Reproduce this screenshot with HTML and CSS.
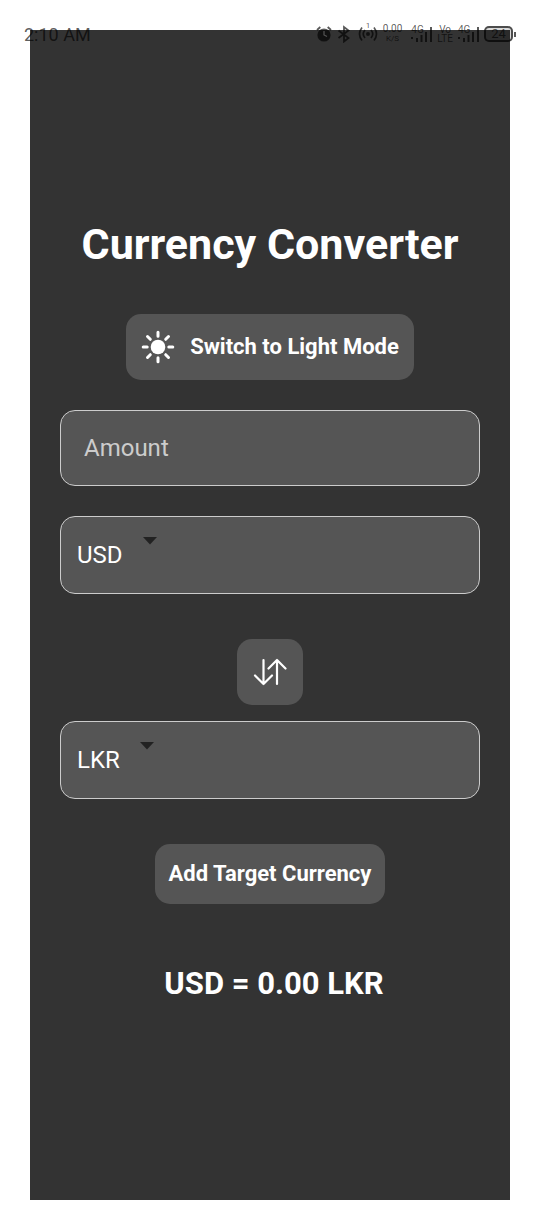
FILE: index.html
```html
<!DOCTYPE html>
<html lang="en">
<head>
<meta charset="utf-8">
<meta name="viewport" content="width=device-width, initial-scale=1">
<title>Currency Converter</title>
<link rel="stylesheet" href="styles.css">
</head>
<body>
<header class="status">
  <span class="time">2:10 AM</span>
  <div class="indicators">
    <svg class="ico" width="16" height="18" viewBox="0 0 16 18" aria-hidden="true"><circle cx="8" cy="10" r="6.600" fill="currentColor"/><path d="M1 5 4.300 2M15 5 11.700 2" stroke="currentColor" stroke-width="1.800" fill="none"/><path d="M8 6v4l3 1.500" stroke="#555" stroke-width="1.200" fill="none"/></svg>
    <svg class="ico" width="14" height="18" viewBox="0 0 14 18" aria-hidden="true"><path d="M1.500 5.500 11.500 13 7 16.500V2l4.500 3.500L1.500 13" fill="none" stroke="currentColor" stroke-width="1.800"/></svg>
    <span class="hotspot"><small class="count">1</small><svg class="ico" width="20" height="16" viewBox="0 0 20 16" aria-hidden="true"><circle cx="10" cy="8" r="2" fill="currentColor"/><path d="M4 1.500q-5 6.500 0 13M16 1.500q5 6.500 0 13M7 4q-3.500 4 0 8M13 4q3.500 4 0 8" fill="none" stroke="currentColor" stroke-width="1.700"/></svg></span>
    <span class="stack speed"><span class="rate">0.00</span><span class="unit">K/S</span></span>
    <span class="signal"><span class="net">4G</span><svg class="bars" width="21" height="16" viewBox="0 0 21 16" aria-hidden="true"><path d="M1 11v2M6 12v4M10.500 9v7M15 6v10M20 1v15" stroke="currentColor" stroke-width="2"/></svg></span>
    <span class="stack"><span class="net">Vo</span><span class="net">LTE</span></span>
    <span class="signal"><span class="net">4G</span><svg class="bars" width="21" height="16" viewBox="0 0 21 16" aria-hidden="true"><path d="M1 11v2M6 12v4M10.500 9v7M15 6v10M20 1v15" stroke="currentColor" stroke-width="2"/></svg></span>
    <span class="battery">24</span>
  </div>
</header>
<main class="screen">
  <h1 class="title">Currency Converter</h1>
  <button class="button theme" type="button">
    <svg width="34" height="34" viewBox="0 0 34 34" aria-hidden="true"><circle cx="17" cy="17" r="7.300" fill="#fff"/><path d="M17 2.200v4M17 27.800v4M2.200 17h4M27.800 17h4M6.500 6.500l2.800 2.800M24.700 24.700l2.800 2.800M6.500 27.500l2.800-2.800M24.700 9.300l2.800-2.800" stroke="#fff" stroke-width="3" stroke-linecap="round"/></svg>
    <span>Switch to Light Mode</span>
  </button>
  <input class="field amount" type="text" inputmode="decimal" placeholder="Amount" aria-label="Amount">
  <div class="field picker">
    <select class="select" aria-label="Source currency"><option>USD</option><option>LKR</option></select>
    <svg class="caret" width="16" height="8" viewBox="0 0 16 8" aria-hidden="true"><path d="M1 0h14L8 7.500z" fill="#222"/></svg>
  </div>
  <button class="button swap" type="button" aria-label="Swap currencies">
    <svg width="34" height="28" viewBox="0 0 34 28" aria-hidden="true"><path d="M10.500 2v24M2 17.500l8.500 8.500 8.500-8.500M24 26V2M15.500 10.500 24 2l8.500 8.500" fill="none" stroke="#fff" stroke-width="2.200" stroke-linecap="round" stroke-linejoin="round"/></svg>
  </button>
  <div class="field picker target">
    <select class="select" aria-label="Target currency"><option>LKR</option><option>USD</option></select>
    <svg class="caret" width="16" height="8" viewBox="0 0 16 8" aria-hidden="true"><path d="M1 0h14L8 7.500z" fill="#222"/></svg>
  </div>
  <button class="button add" type="button">Add Target Currency</button>
  <p class="result">USD = 0.00 LKR</p>
</main>
</body>
</html>
```
FILE: styles.css
```css
* { box-sizing: border-box; }
body {
  margin: 0;
  padding: 30px;
  min-height: 100vh;
  display: flex;
  background: #fff;
  font-family: Roboto, "Liberation Sans", sans-serif;
}
.status {
  position: absolute;
  top: 22px;
  left: 24px;
  right: 24px;
  height: 24px;
  display: flex;
  justify-content: space-between;
  align-items: center;
  color: rgba(0, 0, 0, 0.65);
}
.time { font-size: 18px; }
.indicators { display: flex; align-items: center; gap: 5px; }
.ico, .bars { display: block; }
.hotspot { position: relative; margin-left: 2px; }
.count { position: absolute; top: -4px; left: 8px; font-size: 8px; line-height: 8px; }
.stack { display: flex; flex-direction: column; align-items: center; font-size: 10px; line-height: 10px; }
.speed { margin-right: 4px; }
.unit { font-size: 8px; }
.signal { position: relative; }
.net { font-size: 10px; line-height: 9px; }
.signal .net { position: absolute; top: -1px; left: 0; }
.battery {
  position: relative;
  width: 29px;
  height: 16px;
  margin-right: 3px;
  border: 2px solid currentColor;
  border-radius: 5px;
  background: rgba(0, 0, 0, 0.15);
  font-size: 13px;
  line-height: 12px;
  text-align: center;
}
.battery::after {
  content: "";
  position: absolute;
  top: 4px;
  right: -5px;
  width: 2px;
  height: 5px;
  background: currentColor;
}
.screen {
  flex: 1;
  display: flex;
  flex-direction: column;
  align-items: center;
  justify-content: center;
  padding: 0 30px;
  background: #333;
  color: #fff;
}
.title { margin: 0 0 46px; font-size: 43px; line-height: 48px; font-weight: 700; }
.button {
  display: flex;
  align-items: center;
  justify-content: center;
  border: 0;
  border-radius: 15px;
  background: #555;
  color: #fff;
  font: 700 22px/30px Roboto, "Liberation Sans", sans-serif;
}
.theme { gap: 15px; padding: 16px 15px; }
.field {
  width: 100%;
  border: 1px solid #ccc;
  border-radius: 15px;
  background: #555;
  color: #fff;
  font: 400 24px/28px Roboto, "Liberation Sans", sans-serif;
}
.amount { margin: 30px 0; padding: 23px; }
.amount::placeholder { color: #ccc; opacity: 1; }
.picker { display: flex; align-items: flex-start; gap: 19px; padding: 20px 16px; }
.select {
  appearance: none;
  field-sizing: content;
  margin: 0;
  padding: 4px 0;
  border: 0;
  background: transparent;
  color: inherit;
  font: inherit;
}
.swap { margin: 45px 0 16px; padding: 19px 16px; }
.add { margin: 45px 0 62px; padding: 15px 14px; }
.result { margin: 0 0 9px; padding-left: 8px; font-size: 31px; line-height: 36px; font-weight: 700; }
```
